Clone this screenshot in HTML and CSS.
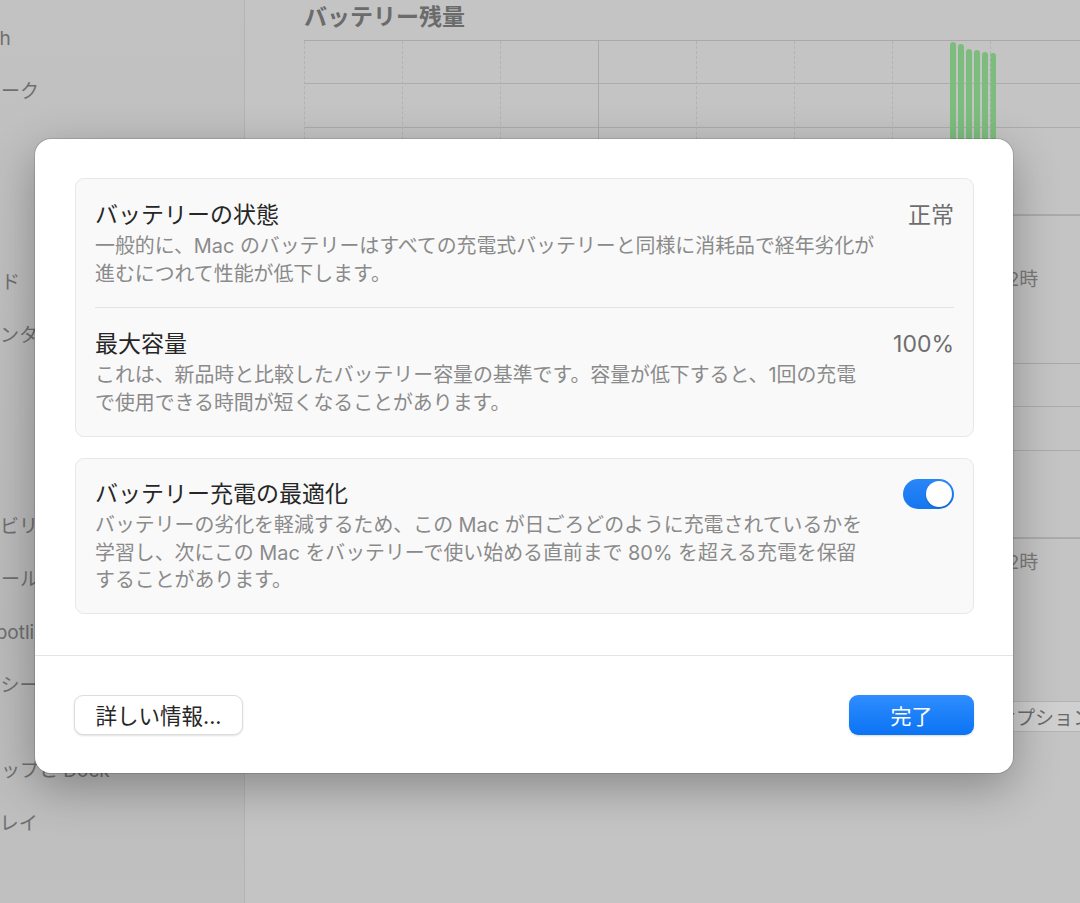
FILE: index.html
```html
<!DOCTYPE html>
<html lang="ja">
<head>
    <meta charset="UTF-8">
    <meta name="viewport" content="width=device-width, initial-scale=1.0">
    <title>バッテリー</title>
    <link rel="stylesheet" href="styles.css">
</head>
<body>
    <div class="window">
        <aside class="sidebar">
            <ul class="side-group">
                <li>Bluetooth</li>
                <li>ネットワーク</li>
            </ul>
            <ul class="side-group">
                <li>通知</li>
                <li>サウンド</li>
                <li>集中モード</li>
                <li>スクリーンタイム</li>
            </ul>
            <ul class="side-group">
                <li>一般</li>
                <li>外観</li>
                <li>アクセシビリティ</li>
                <li>コントロールセンター</li>
                <li>Siri と Spotlight</li>
                <li>プライバシーとセキュリティ</li>
            </ul>
            <ul class="side-group">
                <li>デスクトップと Dock</li>
                <li>ディスプレイ</li>
                <li>壁紙</li>
            </ul>
        </aside>

        <main class="content">
            <h2 class="chart-title">バッテリー残量</h2>
            <div class="chart">
                <div class="col"></div>
                <div class="col"></div>
                <div class="col"></div>
                <div class="col day"></div>
                <div class="col"></div>
                <div class="col"></div>
                <div class="col bars">
                    <span class="bar" style="height: 173px"></span>
                    <span class="bar" style="height: 171px"></span>
                    <span class="bar" style="height: 166px"></span>
                    <span class="bar" style="height: 165px"></span>
                    <span class="bar" style="height: 163px"></span>
                    <span class="bar" style="height: 162px"></span>
                </div>
                <div class="col"></div>
            </div>
            <div class="axis">
                <span>15時</span><span>18時</span><span>21時</span><span>0時</span>
                <span>3時</span><span>6時</span><span>9時</span><span>12時</span>
            </div>

            <h2 class="chart-title second">画面使用状況</h2>
            <div class="chart">
                <div class="col"></div>
                <div class="col"></div>
                <div class="col"></div>
                <div class="col day"></div>
                <div class="col"></div>
                <div class="col"></div>
                <div class="col"></div>
                <div class="col"></div>
            </div>
            <div class="axis last">
                <span>15時</span><span>18時</span><span>21時</span><span>0時</span>
                <span>3時</span><span>6時</span><span>9時</span><span>12時</span>
            </div>

            <div class="options-row">
                <button class="options-btn">オプション...</button>
            </div>
        </main>
    </div>

    <div class="sheet">
        <div class="sheet-body">
            <div class="group">
                <div class="row">
                    <div class="row-text">
                        <div class="row-title">バッテリーの状態</div>
                        <div class="row-desc">一般的に、Mac のバッテリーはすべての充電式バッテリーと同様に消耗品で経年劣化が<br>進むにつれて性能が低下します。</div>
                    </div>
                    <div class="row-value">正常</div>
                </div>
                <div class="row">
                    <div class="row-text">
                        <div class="row-title">最大容量</div>
                        <div class="row-desc">これは、新品時と比較したバッテリー容量の基準です。容量が低下すると、1回の充電<br>で使用できる時間が短くなることがあります。</div>
                    </div>
                    <div class="row-value">100%</div>
                </div>
            </div>

            <div class="group">
                <div class="row compact">
                    <div class="row-text">
                        <div class="row-title">バッテリー充電の最適化</div>
                        <div class="row-desc">バッテリーの劣化を軽減するため、この Mac が日ごろどのように充電されているかを<br>学習し、次にこの Mac をバッテリーで使い始める直前まで 80% を超える充電を保留<br>することがあります。</div>
                    </div>
                    <div class="toggle on"><span class="knob"></span></div>
                </div>
            </div>
        </div>

        <div class="sheet-footer">
            <button class="btn">詳しい情報...</button>
            <button class="btn primary">完了</button>
        </div>
    </div>
</body>
</html>
```

FILE: styles.css
```css
body {
    margin: 0;
    width: 1080px;
    height: 903px;
    overflow: hidden;
    font-family: "Inter", "Noto Sans CJK JP", sans-serif;
    background-color: #c3c3c3;
    position: relative;
}

.window {
    display: flex;
    height: 903px;
}

/* sidebar, cut off on the left */
.sidebar {
    width: 245px;
    flex-shrink: 0;
    overflow: hidden;
    background: linear-gradient(to bottom, #c2c2c2, #bababa 70%, #c0c0c0);
    border-right: 1px solid #b3b3b3;
    padding-top: 12px;
    box-sizing: border-box;
}

.side-group {
    list-style: none;
    margin: 0 0 0 -75px;
    padding: 0;
}

.side-group + .side-group {
    margin-top: 32px;
}

.side-group li {
    height: 53px;
    line-height: 53px;
    font-size: 19px;
    color: #6f6f6f;
    white-space: nowrap;
}

/* main content behind the sheet */
.content {
    flex: 1;
    padding: 3px 0 0 59px;
    overflow: hidden;
    background-color: #c4c4c4;
}

.chart-title {
    margin: 0;
    font-size: 23px;
    line-height: 28px;
    font-weight: 700;
    color: #6b6b6b;
}

.chart-title.second {
    margin-top: 20px;
}

.chart {
    display: flex;
    margin-top: 9px;
    height: 174px;
    width: 900px;
    border-top: 1px solid #a9a9a9;
    border-bottom: 1px solid #a9a9a9;
    background: repeating-linear-gradient(to bottom, transparent 0, transparent 42.5px, #acacac 42.5px, #acacac 43.5px);
}

.chart-title.second + .chart {
    margin-top: 23px;
}

.col {
    width: 98px;
    flex-shrink: 0;
    border-left: 1px dashed #b3b3b3;
    box-sizing: border-box;
}

.col.day {
    border-left-style: solid;
    border-left-color: #a9a9a9;
}

.col.bars {
    display: flex;
    align-items: flex-end;
    gap: 2px;
    padding-left: 57px;
}

.bar {
    width: 6px;
    flex-shrink: 0;
    background-color: #7cbd7d;
    border-radius: 3px 3px 0 0;
}

.axis {
    display: flex;
    height: 76px;
    padding-top: 52px;
    box-sizing: border-box;
    font-size: 19px;
    line-height: 24px;
    color: #7a7a7a;
}

.axis.last {
    height: 37px;
    padding-top: 12px;
}

.axis span {
    width: 98px;
    flex-shrink: 0;
    padding-left: 10px;
    box-sizing: border-box;
}

.options-row {
    margin-top: 125px;
    padding-left: 680px;
}

.options-btn {
    font-family: inherit;
    font-size: 19px;
    height: 31px;
    padding: 0 12px;
    color: #6a6a6a;
    background-color: #d0d0d0;
    border: 1px solid #b4b4b4;
    border-radius: 6px;
    white-space: nowrap;
}

/* modal sheet */
.sheet {
    position: absolute;
    left: 35px;
    top: 139px;
    width: 978px;
    background-color: #fff;
    border-radius: 16px;
    box-shadow: 0 0 0 1px rgba(0, 0, 0, 0.12), 0 14px 46px rgba(0, 0, 0, 0.3);
}

.sheet-body {
    display: flex;
    flex-direction: column;
    gap: 21px;
    padding: 39px 39px 41px 40px;
}

.group {
    background-color: #f9f9f9;
    border: 1px solid #e7e7e7;
    border-radius: 9px;
    padding: 0 19px;
}

.row {
    display: flex;
    justify-content: space-between;
    align-items: flex-start;
    padding: 22px 0 19px;
}

.row.compact {
    padding: 21px 0 18px;
}

.row + .row {
    border-top: 1px solid #e3e3e3;
}

.row-title {
    font-size: 23px;
    line-height: 28px;
    color: #262626;
}

.row-desc {
    margin-top: 4px;
    font-size: 19.9px;
    line-height: 27.5px;
    color: #8a8a8a;
    white-space: nowrap;
}

.row-value {
    font-size: 23px;
    line-height: 28px;
    color: #6e6e6e;
}

.toggle {
    width: 51px;
    height: 30px;
    margin-top: -1px;
    border-radius: 15px;
    background-color: #d0d0d0;
    display: flex;
    align-items: center;
    padding: 2px;
    box-sizing: border-box;
}

.toggle.on {
    background: linear-gradient(to bottom, #2a86f8, #1476f0);
    justify-content: flex-end;
}

.knob {
    width: 26px;
    height: 26px;
    border-radius: 50%;
    background-color: #fff;
    box-shadow: 0 1px 2px rgba(0, 0, 0, 0.2);
}

.sheet-footer {
    display: flex;
    justify-content: space-between;
    border-top: 1px solid #e4e4e4;
    padding: 39px 39px 38px 39px;
}

.btn {
    font-family: inherit;
    font-size: 21.5px;
    width: 169px;
    height: 40px;
    padding: 0;
    color: #262626;
    background-color: #fff;
    border: 1px solid #dcdcdc;
    border-radius: 9px;
    box-shadow: 0 1px 2px rgba(0, 0, 0, 0.12);
    cursor: pointer;
}

.btn.primary {
    width: 125px;
    color: #fff;
    font-size: 21px;
    border: none;
    background: linear-gradient(to bottom, #2f8dff, #0b73f4);
    box-shadow: 0 1px 2px rgba(0, 0, 0, 0.15);
}
```
